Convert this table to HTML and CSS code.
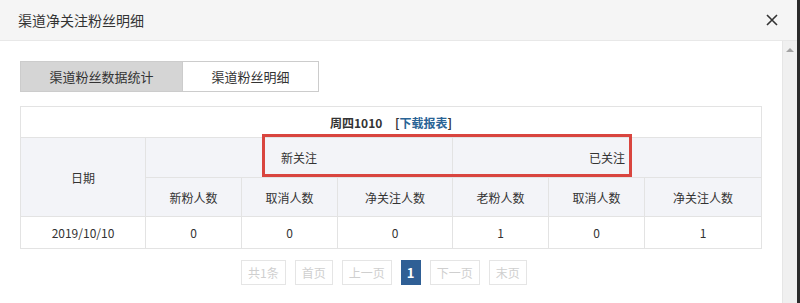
FILE: index.html
```html
<!DOCTYPE html>
<html lang="zh-CN">
<head>
    <meta charset="UTF-8">
    <meta name="viewport" content="width=device-width, initial-scale=1.0">
    <title>渠道净关注粉丝明细</title>
    <link rel="stylesheet" href="styles.css">
</head>
<body>
    <div class="modal">
        <div class="modal-header">
            <span class="modal-title">渠道净关注粉丝明细</span>
            <button class="close" aria-label="关闭">
                <svg width="12" height="12" viewBox="0 0 12 12">
                    <path d="M1 1L11 11M11 1L1 11" stroke="#333" stroke-width="1.6" fill="none"/>
                </svg>
            </button>
        </div>
        <div class="modal-body">
            <div class="content">
                <div class="tabs">
                    <div class="tab active">渠道粉丝数据统计</div>
                    <div class="tab">渠道粉丝明细</div>
                </div>

                <div class="table-wrap">
                    <table class="report">
                        <colgroup>
                            <col style="width:125px">
                            <col style="width:96px">
                            <col style="width:96px">
                            <col style="width:115px">
                            <col style="width:96px">
                            <col style="width:96px">
                            <col style="width:117px">
                        </colgroup>
                        <tr class="caption-row">
                            <td colspan="7"><b>周四1010</b> <b class="bracket">[<a href="#">下载报表</a>]</b></td>
                        </tr>
                        <tr class="head-row group">
                            <th rowspan="2">日期</th>
                            <th colspan="3">新关注</th>
                            <th colspan="3">已关注</th>
                        </tr>
                        <tr class="head-row sub">
                            <th>新粉人数</th>
                            <th>取消人数</th>
                            <th>净关注人数</th>
                            <th>老粉人数</th>
                            <th>取消人数</th>
                            <th>净关注人数</th>
                        </tr>
                        <tr class="data-row">
                            <td>2019/10/10</td>
                            <td>0</td>
                            <td>0</td>
                            <td>0</td>
                            <td>1</td>
                            <td>0</td>
                            <td>1</td>
                        </tr>
                    </table>
                    <div class="mark"></div>
                </div>

                <div class="pager">
                    <span class="page disabled">共1条</span>
                    <span class="page disabled">首页</span>
                    <span class="page disabled">上一页</span>
                    <span class="page current">1</span>
                    <span class="page disabled">下一页</span>
                    <span class="page disabled">末页</span>
                </div>
            </div>
            <div class="scrollbar">
                <span class="arrow"></span>
            </div>
        </div>
    </div>
</body>
</html>
```

FILE: styles.css
```css
html, body {
    margin: 0;
    height: 100%;
}
body {
    font-family: "Noto Sans CJK SC", "Liberation Sans", sans-serif;
    font-size: 12px;
    color: #333;
    background-color: #fff;
}
.modal {
    height: 100%;
    display: flex;
    flex-direction: column;
    border-right: 3px solid #2b2b2b;
    box-sizing: border-box;
}
.modal-header {
    height: 40px;
    flex: none;
    display: flex;
    align-items: center;
    justify-content: space-between;
    padding: 0 19px 0 18px;
    background-color: #f5f5f5;
    border-bottom: 1px solid #e8e8e8;
}
.modal-title {
    font-size: 14px;
}
.close {
    display: flex;
    padding: 0;
    border: none;
    background: none;
}
.modal-body {
    flex: 1;
    display: flex;
    min-height: 0;
}
.content {
    flex: 1;
    padding: 20px 0 0 20px;
}
.scrollbar {
    width: 15px;
    flex: none;
    background-color: #f0f0f0;
    border-left: 1px solid #e6e6e6;
    display: flex;
    justify-content: center;
    padding-top: 7px;
    box-sizing: border-box;
}
.arrow {
    width: 0;
    height: 0;
    border-left: 4px solid transparent;
    border-right: 4px solid transparent;
    border-bottom: 4px solid #a3a3a3;
}
.tabs {
    display: flex;
    width: 299px;
    height: 31px;
}
.tab {
    display: flex;
    align-items: center;
    justify-content: center;
    border: 1px solid #ccc;
    box-sizing: border-box;
    font-size: 13px;
    background-color: #fff;
}
.tab:first-child {
    width: 163px;
}
.tab:last-child {
    flex: 1;
    border-left: none;
}
.tab.active {
    background-color: #d5d5d5;
}
.table-wrap {
    position: relative;
    width: 741px;
    margin-top: 14px;
}
.report {
    width: 741px;
    table-layout: fixed;
    border-collapse: collapse;
}
.report td, .report th {
    border: 1px solid #e3e3e3;
    text-align: center;
    font-weight: normal;
    padding: 0;
}
.caption-row td {
    height: 30px;
    font-size: 12px;
}
.caption-row b {
    font-weight: bold;
}
.bracket {
    margin-left: 10px;
}
.bracket a {
    color: #2a6496;
    text-decoration: none;
}
.head-row th {
    background-color: #f3f4f8;
}
.head-row.group th {
    height: 39px;
}
.head-row.sub th {
    height: 38px;
}
.data-row td {
    height: 31px;
}
/* red highlight frame over the two group headers */
.mark {
    position: absolute;
    left: 242px;
    top: 28px;
    width: 370px;
    height: 43px;
    border: 3px solid #d9453f;
    box-sizing: border-box;
}
.pager {
    display: flex;
    gap: 9px;
    margin-top: 11px;
    padding-left: 221px;
}
.page {
    height: 25px;
    box-sizing: border-box;
    display: flex;
    align-items: center;
    padding: 0 6px;
    border: 1px solid #e5e5e5;
    color: #cfcfcf;
    font-size: 12px;
}
.page.current {
    width: 20px;
    justify-content: center;
    padding: 0;
    background-color: #2f5f95;
    border-color: #2f5f95;
    color: #fff;
    font-weight: bold;
    font-size: 13px;
}
```
